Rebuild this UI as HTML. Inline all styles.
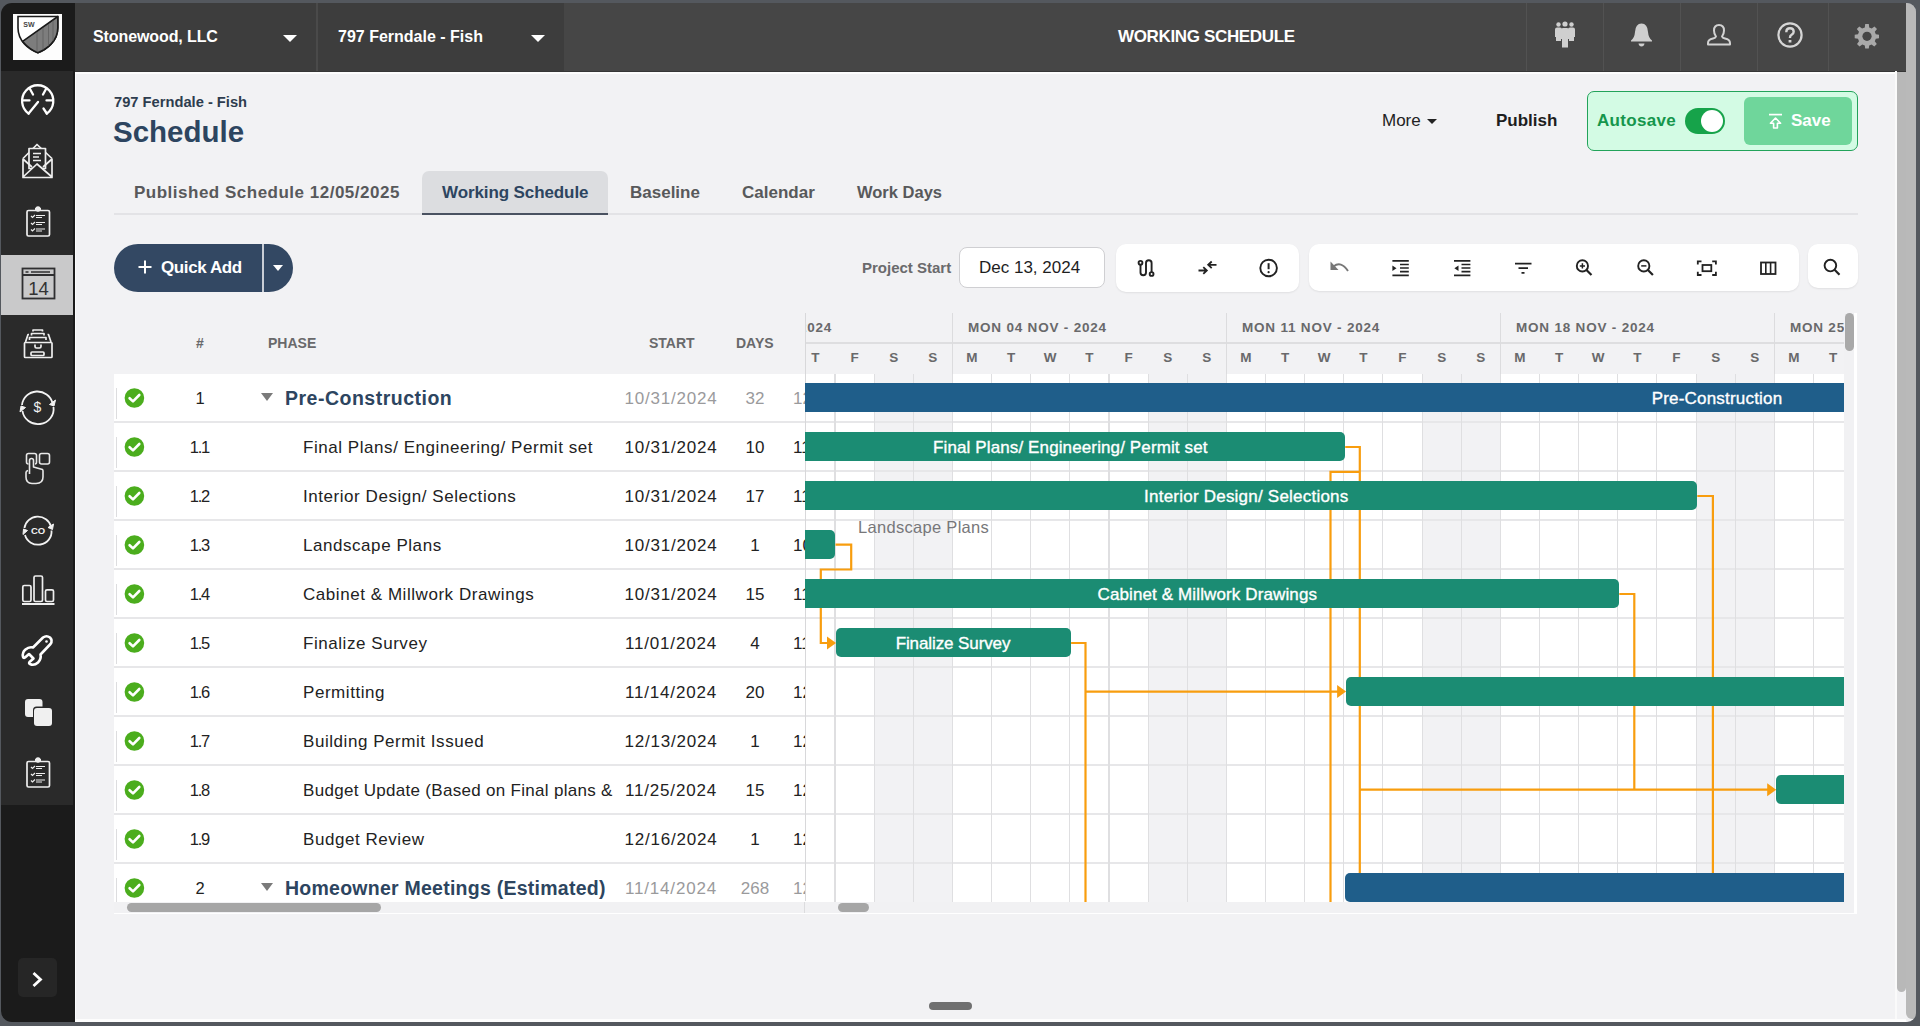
<!DOCTYPE html>
<html><head><meta charset="utf-8">
<style>
*{box-sizing:border-box;margin:0;padding:0}
html,body{width:1920px;height:1026px;overflow:hidden;background:#f2f2f4;font-family:"Liberation Sans",sans-serif;position:relative}
.a{position:absolute}
.t{position:absolute;white-space:nowrap;line-height:1}
svg{position:absolute;overflow:visible}
#frame{position:absolute;left:1px;top:3px;width:1915px;height:1019px;border-radius:11px 9px 9px 11px;box-shadow:0 0 0 40px #54585e;z-index:50;pointer-events:none}
.tri{position:absolute;width:0;height:0;border-left:7px solid transparent;border-right:7px solid transparent;border-top:7px solid #fff}
.tdiv{position:absolute;top:3px;width:1px;height:68px;background:#525252}
</style></head><body>
<!-- sidebar -->
<div class="a" style="left:0;top:0;width:75px;height:1026px;background:#2a2a2a"></div>
<div class="a" style="left:0;top:0;width:75px;height:71px;background:#1b1b1b"></div>
<div class="a" style="left:0;top:805px;width:75px;height:221px;background:#1b1b1b"></div>
<div class="a" style="left:0;top:255px;width:75px;height:60px;background:#c9c9ca"></div>
<div class="a" style="left:73px;top:71px;width:2px;height:955px;background:#1a1a1a"></div><div class="a" style="left:75px;top:71px;width:1.3px;height:955px;background:#fcfcfd"></div>
<!-- top bar -->
<div class="a" style="left:75px;top:72px;width:1822px;height:2px;background:#fdfdfd"></div>
<div class="a" style="left:75px;top:0;width:1831px;height:72px;background:#464646;border-bottom:1px solid #363636"></div>
<div class="a" style="left:75px;top:0;width:241px;height:71px;background:#3d3d3d"></div>
<div class="a" style="left:316px;top:0;width:2px;height:71px;background:#4a4a4a"></div>
<div class="a" style="left:318px;top:0;width:246px;height:71px;background:#3d3d3d"></div>
<div class="t" style="left:93px;top:29px;font-size:16px;font-weight:bold;color:#fff;letter-spacing:-0.1px">Stonewood, LLC</div>
<div class="tri" style="left:283px;top:35px"></div>
<div class="t" style="left:338px;top:29px;font-size:16px;font-weight:bold;color:#fff">797 Ferndale - Fish</div>
<div class="tri" style="left:531px;top:35px"></div>
<div class="t" style="left:1118px;top:28px;font-size:17px;font-weight:bold;color:#fff;letter-spacing:-0.35px">WORKING SCHEDULE</div>
<div class="tdiv" style="left:1526px"></div>
<div class="tdiv" style="left:1603px"></div>
<div class="tdiv" style="left:1680px"></div>
<div class="tdiv" style="left:1757px"></div>
<div class="tdiv" style="left:1828px"></div>
<!--TISTART--><svg style="left:1553px;top:20px" width="24" height="29" viewBox="0 0 24 29" fill="#cfcfcf">
  <circle cx="5.5" cy="4.5" r="2.2"/><circle cx="12" cy="4" r="2.6"/><circle cx="18.5" cy="4.5" r="2.2"/>
  <path d="M2 9.5Q2 7.5 4 7.5H7Q9 7.5 9 9.5V17H8V21H3V17H2Z"/>
  <path d="M15 9.5Q15 7.5 17 7.5H20Q22 7.5 22 9.5V17H21V21H16V17H15Z"/>
  <path d="M8 10Q8 8 10 8H14Q16 8 16 10V19H15V27.5H9V19H8Z"/>
</svg>
<svg style="left:1630px;top:22px" width="23" height="26" viewBox="0 0 23 26" fill="#cfcfcf">
  <path d="M11.5 1.5Q17.5 1.5 18 10Q18.5 16 22 18.5V19.5H1V18.5Q4.5 16 5 10Q5.5 1.5 11.5 1.5Z"/>
  <path d="M8.5 21.5H14.5Q14 24.5 11.5 24.5Q9 24.5 8.5 21.5Z"/>
</svg>
<svg style="left:1706px;top:23px" width="26" height="24" viewBox="0 0 26 24" fill="none" stroke="#d2d2d2" stroke-width="2" stroke-linejoin="round">
  <path d="M13 2Q18 2 18 7.5Q18 11 16 13.5Q16.5 15 19 15.5Q24 16.5 24 20V21.5H2V20Q2 16.5 7 15.5Q9.5 15 10 13.5Q8 11 8 7.5Q8 2 13 2Z"/>
</svg>
<svg style="left:1776px;top:21px" width="28" height="28" viewBox="0 0 28 28">
  <circle cx="14" cy="14" r="11.6" fill="none" stroke="#d6d6d6" stroke-width="2.2"/>
  <path d="M10.3 11.2Q10.3 7.3 14 7.3Q17.7 7.3 17.7 10.8Q17.7 12.8 15.5 13.8Q14 14.5 14 16.5V17" fill="none" stroke="#d6d6d6" stroke-width="2.4"/>
  <rect x="12.6" y="19" width="2.8" height="2.5" fill="#d6d6d6"/>
</svg>
<svg style="left:1854px;top:23px" width="26" height="26" viewBox="0 0 26 26">
  <g fill="#a9a9a9" transform="translate(13 13)">
    <path d="M-1.8 -12H1.8L2.2 -8.5L4.7 -7.4L7.5 -9.6L10 -7.1L7.8 -4.3L8.8 -1.8L12 -1.3V2.3L8.8 2.7L7.8 5.2L9.8 8L7.3 10.5L4.5 8.4L2.2 9.4L1.8 12.5H-1.8L-2.2 9.4L-4.7 8.4L-7.5 10.5L-10 8L-8 5.2L-9 2.7L-12.3 2.3V-1.3L-9 -1.8L-8 -4.3L-10.2 -7.1L-7.7 -9.6L-4.9 -7.4L-2.2 -8.5Z"/>
  </g>
  <circle cx="13" cy="13.3" r="4.6" fill="#464646"/>
</svg>
<!--TIEND-->
<!-- right scrollbars -->
<div class="a" style="left:1906px;top:3px;width:9.5px;height:1016px;background:#b9b9b9;border-radius:0 9px 0 6px"></div>
<div class="a" style="left:1897px;top:72px;width:9px;height:920px;background:#b8b8b8;border-radius:0 0 5px 5px"></div>
<div class="a" style="left:1895px;top:71px;width:2px;height:950px;background:#fafafa"></div>

<!-- page header -->
<div class="t" style="left:114px;top:95px;font-size:14.7px;font-weight:bold;color:#2e3d4f">797 Ferndale - Fish</div>
<div class="t" style="left:113px;top:117px;font-size:29.5px;font-weight:bold;color:#2d4560">Schedule</div>
<div class="t" style="left:1382px;top:112px;font-size:17px;color:#222">More</div>
<div class="a" style="left:1427px;top:119px;width:0;height:0;border-left:5px solid transparent;border-right:5px solid transparent;border-top:5px solid #222"></div>
<div class="t" style="left:1496px;top:112px;font-size:17px;font-weight:bold;color:#1e1e1e">Publish</div>
<div class="a" style="left:1587px;top:91px;width:271px;height:60px;background:#d3fbe4;border:1.5px solid #22a35a;border-radius:7px"></div>
<div class="t" style="left:1597px;top:112px;font-size:17px;font-weight:bold;color:#15964c;letter-spacing:0.3px">Autosave</div>
<div class="a" style="left:1685px;top:108px;width:40px;height:26px;background:#16a34a;border-radius:13px"></div>
<div class="a" style="left:1701px;top:110px;width:22px;height:22px;background:#fff;border-radius:11px"></div>
<div class="a" style="left:1744px;top:97px;width:108px;height:48px;background:#6fd69b;border-radius:6px"></div>
<svg style="left:1768px;top:112px" width="16" height="18" viewBox="0 0 16 18"><path d="M1 2.6H14" stroke="#fff" stroke-width="1.7"/><path d="M7.5 6L12.6 11.2H9.4V16H5.6V11.2H2.4Z" stroke="#fff" stroke-width="1.6" fill="none" stroke-linejoin="round"/></svg>
<div class="t" style="left:1791px;top:112px;font-size:17px;font-weight:bold;color:#fff">Save</div>
<!-- tabs -->
<div class="a" style="left:114px;top:213px;width:1744px;height:2px;background:#e3e3e6"></div>
<div class="a" style="left:422px;top:171px;width:186px;height:44px;background:#dcdde0;border-radius:7px 7px 0 0;border-bottom:2px solid #4a5261"></div>
<div class="t" style="left:134px;top:184px;font-size:17px;font-weight:bold;color:#58595b;letter-spacing:0.5px">Published Schedule 12/05/2025</div>
<div class="t" style="left:442px;top:184px;font-size:17px;font-weight:bold;color:#2d4560;letter-spacing:-0.1px">Working Schedule</div>
<div class="t" style="left:630px;top:184px;font-size:17px;font-weight:bold;color:#58595b">Baseline</div>
<div class="t" style="left:742px;top:184px;font-size:17px;font-weight:bold;color:#58595b">Calendar</div>
<div class="t" style="left:857px;top:184px;font-size:16.5px;font-weight:bold;color:#58595b">Work Days</div>
<!-- toolbar -->
<div class="a" style="left:114px;top:244px;width:179px;height:48px;background:#334863;border-radius:24px"></div>
<div class="a" style="left:262px;top:244px;width:1.5px;height:48px;background:#c9ced6"></div>
<svg style="left:138px;top:260px" width="14" height="14" viewBox="0 0 14 14"><path d="M7 0.5V13.5M0.5 7H13.5" stroke="#fff" stroke-width="2"/></svg>
<div class="t" style="left:161px;top:259px;font-size:17px;font-weight:bold;color:#fff;letter-spacing:-0.4px">Quick Add</div>
<div class="a" style="left:273px;top:265px;width:0;height:0;border-left:5px solid transparent;border-right:5px solid transparent;border-top:6px solid #fff"></div>
<div class="t" style="left:862px;top:260px;font-size:15px;font-weight:bold;color:#6a6a6c">Project Start</div>
<div class="a" style="left:959px;top:247px;width:146px;height:41px;background:#fff;border:1px solid #cfcfd2;border-radius:8px"></div>
<div class="t" style="left:979px;top:259px;font-size:17px;color:#1e1e1e">Dec 13, 2024</div>
<div class="a" style="left:1116px;top:244px;width:183px;height:48px;background:#fff;border-radius:10px;box-shadow:0 1px 2px rgba(0,0,0,0.08)"></div>
<div class="a" style="left:1309px;top:244px;width:490px;height:47px;background:#fff;border-radius:10px;box-shadow:0 1px 2px rgba(0,0,0,0.08)"></div>
<div class="a" style="left:1808px;top:244px;width:50px;height:44px;background:#fff;border-radius:10px;box-shadow:0 1px 2px rgba(0,0,0,0.08)"></div>
<!--ICSTART--><!-- logo -->
<div class="a" style="left:13px;top:14px;width:49px;height:46px;background:#fdfdfd"></div>
<svg style="left:13px;top:14px" width="49" height="46" viewBox="0 0 49 46">
  <path d="M5 2.5H44.8V14C44.8 27 34 35 24.9 38.7C15.5 35 5 27 5 14Z" fill="#fff" stroke="#1a1a1a" stroke-width="1.6"/>
  <path d="M44.8 2.5L9.6 27.4C14 32.5 19.5 36.5 24.9 38.7C34 35 44.8 27 44.8 14Z" fill="#7d7d7d" stroke="#1a1a1a" stroke-width="1.6" stroke-linejoin="round"/>
  <path d="M24 18V38M30 14V36M35.5 10V32M40 6.5V27" stroke="#5a5a5a" stroke-width="0.7"/>
  <text x="10.3" y="13" font-family="Liberation Sans" font-weight="bold" font-size="7" fill="#444">SW</text>
</svg>
<!-- sidebar icons -->
<svg style="left:12px;top:75px" width="50" height="50" viewBox="0 0 50 50" fill="none" stroke="#fff" stroke-width="2.3" stroke-linecap="round">
  <path d="M16.6 38.5A15.6 15.6 0 1 1 34.8 38.5"/><path d="M16.6 38.5L26 27M34.8 38.5L31.5 33.5M11.5 25.4H17.5M34.5 25.4H40.3M18 14L21 19.5M34 14L31 19.5"/>
</svg>
<svg style="left:12px;top:136px" width="50" height="50" viewBox="0 0 50 50" fill="none" stroke="#eee" stroke-width="1.7" stroke-linejoin="round">
  <path d="M11 22.5L25 8.5L40 22.5"/><rect x="17" y="12.5" width="16.5" height="20" fill="#2a2a2a"/>
  <path d="M21 17.5H29M21 21H27M21 24.5H29"/>
  <path d="M11 41L25 28L40 41Z" fill="#2a2a2a" stroke="none"/><path d="M11 22.5V41.5H40V22.5M11 41L25 28L40 41M11 23L20 31M40 23L31 31"/>
</svg>
<g id="clip1"></g>
<svg style="left:12px;top:197px" width="50" height="50" viewBox="0 0 50 50" fill="none" stroke="#eee" stroke-width="1.7">
  <rect x="15" y="13.5" width="22.5" height="25.5" rx="1.5"/><path d="M23 12.5H29" stroke-width="3"/><circle cx="26" cy="12" r="1.8" fill="#eee"/>
  <path d="M19 19L20.5 20.5L23 18M19 26L20.5 27.5L23 25M19 32.5L20.5 34L23 31.5" stroke-width="1.2"/>
  <path d="M24 18.5H33M24 20.5H30M24 25.5H33M24 27.5H30M24 32H33M24 34H30" stroke-width="1.1"/>
</svg>
<svg style="left:12px;top:259px" width="50" height="50" viewBox="0 0 50 50" fill="none" stroke="#2f2f31" stroke-width="1.8">
  <rect x="10.5" y="9.5" width="32" height="30"/><path d="M10.5 16H42.5" stroke-width="2"/><path d="M13.5 13H16.5M19 13H38" stroke-width="1.3"/>
  <text x="26.5" y="35.5" text-anchor="middle" font-family="Liberation Sans" font-size="18.5" fill="#333" stroke="none">14</text>
</svg>
<svg style="left:12px;top:319px" width="50" height="50" viewBox="0 0 50 50" fill="none" stroke="#eee" stroke-width="1.7" stroke-linejoin="round">
  <rect x="12.5" y="23.5" width="27.5" height="15" rx="0.8"/><path d="M23 25.5V27.5Q23 29 24.5 29H27.5Q29 29 29 27.5V25.5"/><rect x="19" y="33" width="13" height="3.5" rx="1"/>
  <path d="M13.5 23L16 15.5H17M39 23L36.5 15.5H35.5M17.5 21V18.5H34V21M19.5 16.5V14.5H32V16.5M21 12.5V11H30.5V12.5"/>
</svg>
<svg style="left:12px;top:381px" width="50" height="50" viewBox="0 0 50 50" fill="none" stroke="#f2f2f2" stroke-width="1.8">
  <path d="M10 24A15.5 15 0 0 1 40.5 22"/><path d="M41.5 26A15.5 15 0 0 1 10.5 30"/>
  <path d="M37.5 23.5L43.5 19L42 25Z" fill="#f2f2f2" stroke-width="1"/><path d="M13.5 26.5L8 31L9 25Z" fill="#f2f2f2" stroke-width="1"/>
  <text x="25.5" y="31" text-anchor="middle" font-family="Liberation Sans" font-size="14" fill="#f2f2f2" stroke="none">$</text>
</svg>
<svg style="left:12px;top:442px" width="50" height="50" viewBox="0 0 50 50" fill="none" stroke="#e8e8e8" stroke-width="1.6" stroke-linejoin="round">
  <path d="M16.5 22Q14.5 22 14.5 20V13.5Q14.5 11.5 16.5 11.5H22.5Q24.5 11.5 24.5 13.5V20Q24.5 22 23 22"/>
  <rect x="27.5" y="11.5" width="10" height="10.5" rx="2"/>
  <path d="M17.5 32V18.5Q17.5 16.5 19.5 16.5Q21.5 16.5 21.5 18.5V25L30.5 27.5Q31 28 31 29V35Q31 41.5 24 41.5H20Q14 41.5 14 35V30.5Q14 29 16 28.5"/>
</svg>
<svg style="left:12px;top:504px" width="50" height="50" viewBox="0 0 50 50" fill="none" stroke="#f2f2f2" stroke-width="1.8">
  <path d="M12.5 24A13.5 13 0 0 1 39 22.5"/><path d="M39.5 26.5A13.5 13 0 0 1 13 31"/>
  <path d="M36 23.5L41.5 20L40.5 25.5Z" fill="#f2f2f2" stroke-width="1"/><path d="M15.5 26.5L11 30.5L11.5 25Z" fill="#f2f2f2" stroke-width="1"/>
  <text x="26" y="29.5" text-anchor="middle" font-family="Liberation Sans" font-weight="bold" font-size="9.5" fill="#f2f2f2" stroke="none">CO</text>
</svg>
<svg style="left:12px;top:564px" width="50" height="50" viewBox="0 0 50 50" fill="none" stroke="#eee" stroke-width="1.7">
  <rect x="10.8" y="21.5" width="8.2" height="16" rx="1.5"/><rect x="22" y="12" width="8.5" height="25.5" rx="1.5"/><rect x="33.5" y="25.8" width="8" height="11.7" rx="1.5"/><path d="M10 40H42.5" stroke-width="1.8"/>
</svg>
<svg style="left:12px;top:625px" width="50" height="50" viewBox="0 0 50 50" fill="none" stroke="#fff" stroke-width="2.6" stroke-linejoin="round">
  <path d="M31 12.5Q34.5 10 38 12.5Q41 15.5 38.5 19L28.5 29.5Q29.5 34 26 37.5Q22 41 18 39Q16.5 38.3 17.5 37L21.5 33.5L17 29L13 32.5Q11.5 33.5 11 31.8Q10 27.5 13.5 24.5Q17 21.5 21 22.5Z"/><circle cx="34.5" cy="16.5" r="1.3" fill="#fff" stroke="none"/>
</svg>
<svg style="left:12px;top:687px" width="50" height="50" viewBox="0 0 50 50">
  <path d="M16 12H27.5Q30.5 12 30.5 15V19.5H24.5Q21 19.5 21 23V30H16Q13 30 13 27V15Q13 12 16 12Z" fill="#f0f0f0"/>
  <rect x="22" y="21" width="18" height="18" rx="3" fill="#f0f0f0"/>
</svg>
<svg style="left:12px;top:748px" width="50" height="50" viewBox="0 0 50 50" fill="none" stroke="#eee" stroke-width="1.7">
  <rect x="15" y="13.5" width="22.5" height="25.5" rx="1.5"/><path d="M23 12.5H29" stroke-width="3"/><circle cx="26" cy="12" r="1.8" fill="#eee"/>
  <path d="M19 19L20.5 20.5L23 18M19 26L20.5 27.5L23 25M19 32.5L20.5 34L23 31.5" stroke-width="1.2"/>
  <path d="M24 18.5H33M24 20.5H30M24 25.5H33M24 27.5H30M24 32H33M24 34H30" stroke-width="1.1"/>
</svg>
<!-- expand button -->
<div class="a" style="left:18px;top:958px;width:39px;height:39px;background:#262626;border-radius:5px"></div>
<svg style="left:18px;top:958px" width="39" height="39" viewBox="0 0 39 39"><path d="M15.5 15L22.5 21.5L15.5 28" stroke="#fff" stroke-width="2.8" fill="none"/></svg>
<!--ICEND-->
<!--TOSTART--><svg style="left:0;top:0" width="1920" height="1026" viewBox="0 0 1920 1026" fill="none" stroke="#222" stroke-width="1.9">
  <circle cx="1140.5" cy="262.8" r="1.9"/><circle cx="1151.6" cy="274" r="1.9"/>
  <path d="M1140.5 264.7V272.5A2.75 2.75 0 0 0 1146 272.5V263A2.8 2.8 0 0 1 1151.6 263V272.1"/>
  <path d="M1198.5 270.5H1206.5M1203.3 267.2L1206.8 270.5L1203.3 273.8M1216.5 264.8H1208.5M1211.7 261.5L1208.2 264.8L1211.7 268.1" stroke-width="1.8"/>
  <circle cx="1268.6" cy="268" r="8.3" stroke-width="1.9"/><path d="M1268.6 263.2V269.2" stroke-width="2"/><circle cx="1268.6" cy="272.2" r="1.1" fill="#222" stroke="none"/>
  <path d="M1333.5 266.5Q1341 260.5 1348 271" stroke="#777" stroke-width="1.9"/><path d="M1330.5 261.5V270H1338.5Z" fill="#777" stroke="none"/>
  <path d="M1392.4 260.9H1408.8M1400 264.5H1408.8M1400 268H1408.8M1400 271.7H1408.8M1392.4 275.4H1408.8" stroke-width="1.7"/><path d="M1392.4 265.5L1396.5 268.3L1392.4 271Z" fill="#222" stroke="none"/>
  <path d="M1454 260.9H1470.4M1461.5 264.5H1470.4M1461.5 268H1470.4M1461.5 271.7H1470.4M1454 275.4H1470.4" stroke-width="1.7"/><path d="M1458.5 265.5L1454.4 268.3L1458.5 271Z" fill="#222" stroke="none"/>
  <path d="M1515 263.7H1531.5M1518.5 268.2H1528M1521.5 272.8H1524.5" stroke-width="1.8"/>
  <circle cx="1582.4" cy="265.9" r="5.6"/><path d="M1586.5 270L1591.5 275" stroke-width="2.2"/><path d="M1582.4 263.3V268.5M1579.8 265.9H1585" stroke-width="1.5"/>
  <circle cx="1643.8" cy="265.9" r="5.6"/><path d="M1647.9 270L1652.9 275" stroke-width="2.2"/><path d="M1641.2 265.9H1646.4" stroke-width="1.5"/>
  <path d="M1697.8 264.5V261.3H1701.5M1712.2 261.3H1715.9V264.5M1715.9 271.8V275H1712.2M1701.5 275H1697.8V271.8" stroke-width="1.8"/><rect x="1702.5" y="265" width="8.8" height="6.2" stroke-width="1.8"/>
  <rect x="1761" y="262.5" width="14.5" height="11.5" stroke-width="1.8"/><path d="M1765.8 262.5V274M1770.6 262.5V274" stroke-width="1.6"/>
  <circle cx="1830.4" cy="265.6" r="5.8" stroke-width="1.9"/><path d="M1834.6 269.8L1839.5 274.7" stroke-width="2.2"/>
</svg>
<!--TOEND-->
<!--GRIDSTART--><div class="a" style="left:114px;top:313px;width:1743px;height:601px;background:#fff"></div>
<div class="a" style="left:114px;top:313px;width:1730px;height:61px;background:#f2f2f4"></div>
<div class="a" style="left:1844px;top:313px;width:10px;height:600px;background:#f1f1f3"></div>
<div class="a" style="left:1845px;top:313px;width:9px;height:38px;background:#a9a9a9;border-radius:5px"></div>
<div class="t" style="left:196px;top:335.5px;font-size:14px;font-weight:bold;color:#69696b">#</div>
<div class="t" style="left:268px;top:335.5px;font-size:14px;font-weight:bold;color:#69696b">PHASE</div>
<div class="t" style="left:649px;top:335.5px;font-size:14px;font-weight:bold;color:#69696b">START</div>
<div class="t" style="left:736px;top:335.5px;font-size:14px;font-weight:bold;color:#69696b">DAYS</div>
<div class="a" style="left:114px;top:374px;width:691px;height:528px;overflow:hidden">
<div class="a" style="left:0;top:47px;width:691px;height:2px;background:#e7e7e9"></div>
<div class="a" style="left:2px;top:14px;width:1px;height:31px;background:#dddddf"></div>
<svg style="left:10px;top:14px" width="21" height="21" viewBox="0 0 21 21"><circle cx="10.4" cy="10" r="9.8" fill="#4bad1d"/><path d="M5.6 10.2L9 13.4L15.3 7" stroke="#fff" stroke-width="2.6" fill="none" stroke-linecap="round" stroke-linejoin="round"/></svg>
<div class="t" style="left:36px;top:16px;width:100px;text-align:center;font-size:16.5px;color:#222;letter-spacing:-1.2px;text-indent:-1.2px">1</div>
<div class="a" style="left:147px;top:19px;width:0;height:0;border-left:6.5px solid transparent;border-right:6.5px solid transparent;border-top:8px solid #7a7a7a"></div>
<div class="t" style="left:171px;top:15px;font-size:19.5px;font-weight:bold;color:#2d4560;letter-spacing:0.5px">Pre-Construction</div>
<div class="t" style="left:507px;top:16px;width:100px;text-align:center;font-size:17px;color:#9a9a9c;letter-spacing:0.8px;background:#fff">10/31/2024</div>
<div class="t" style="left:611px;top:16px;width:60px;text-align:center;font-size:17px;color:#9a9a9c">32</div>
<div class="t" style="left:679px;top:16px;font-size:17px;color:#9a9a9c">12</div>
<div class="a" style="left:0;top:96px;width:691px;height:2px;background:#e7e7e9"></div>
<div class="a" style="left:2px;top:63px;width:1px;height:31px;background:#dddddf"></div>
<svg style="left:10px;top:63px" width="21" height="21" viewBox="0 0 21 21"><circle cx="10.4" cy="10" r="9.8" fill="#4bad1d"/><path d="M5.6 10.2L9 13.4L15.3 7" stroke="#fff" stroke-width="2.6" fill="none" stroke-linecap="round" stroke-linejoin="round"/></svg>
<div class="t" style="left:36px;top:65px;width:100px;text-align:center;font-size:16.5px;color:#222;letter-spacing:-1.2px;text-indent:-1.2px">1.1</div>
<div class="t" style="left:189px;top:65px;width:318px;overflow:hidden;font-size:17px;color:#222;letter-spacing:0.55px">Final Plans/ Engineering/ Permit set</div>
<div class="t" style="left:507px;top:65px;width:100px;text-align:center;font-size:17px;color:#222;letter-spacing:0.8px;background:#fff">10/31/2024</div>
<div class="t" style="left:611px;top:65px;width:60px;text-align:center;font-size:17px;color:#222">10</div>
<div class="t" style="left:679px;top:65px;font-size:17px;color:#222">11</div>
<div class="a" style="left:0;top:145px;width:691px;height:2px;background:#e7e7e9"></div>
<div class="a" style="left:2px;top:112px;width:1px;height:31px;background:#dddddf"></div>
<svg style="left:10px;top:112px" width="21" height="21" viewBox="0 0 21 21"><circle cx="10.4" cy="10" r="9.8" fill="#4bad1d"/><path d="M5.6 10.2L9 13.4L15.3 7" stroke="#fff" stroke-width="2.6" fill="none" stroke-linecap="round" stroke-linejoin="round"/></svg>
<div class="t" style="left:36px;top:114px;width:100px;text-align:center;font-size:16.5px;color:#222;letter-spacing:-1.2px;text-indent:-1.2px">1.2</div>
<div class="t" style="left:189px;top:114px;width:318px;overflow:hidden;font-size:17px;color:#222;letter-spacing:0.55px">Interior Design/ Selections</div>
<div class="t" style="left:507px;top:114px;width:100px;text-align:center;font-size:17px;color:#222;letter-spacing:0.8px;background:#fff">10/31/2024</div>
<div class="t" style="left:611px;top:114px;width:60px;text-align:center;font-size:17px;color:#222">17</div>
<div class="t" style="left:679px;top:114px;font-size:17px;color:#222">11</div>
<div class="a" style="left:0;top:194px;width:691px;height:2px;background:#e7e7e9"></div>
<div class="a" style="left:2px;top:161px;width:1px;height:31px;background:#dddddf"></div>
<svg style="left:10px;top:161px" width="21" height="21" viewBox="0 0 21 21"><circle cx="10.4" cy="10" r="9.8" fill="#4bad1d"/><path d="M5.6 10.2L9 13.4L15.3 7" stroke="#fff" stroke-width="2.6" fill="none" stroke-linecap="round" stroke-linejoin="round"/></svg>
<div class="t" style="left:36px;top:163px;width:100px;text-align:center;font-size:16.5px;color:#222;letter-spacing:-1.2px;text-indent:-1.2px">1.3</div>
<div class="t" style="left:189px;top:163px;width:318px;overflow:hidden;font-size:17px;color:#222;letter-spacing:0.55px">Landscape Plans</div>
<div class="t" style="left:507px;top:163px;width:100px;text-align:center;font-size:17px;color:#222;letter-spacing:0.8px;background:#fff">10/31/2024</div>
<div class="t" style="left:611px;top:163px;width:60px;text-align:center;font-size:17px;color:#222">1</div>
<div class="t" style="left:679px;top:163px;font-size:17px;color:#222">10</div>
<div class="a" style="left:0;top:243px;width:691px;height:2px;background:#e7e7e9"></div>
<div class="a" style="left:2px;top:210px;width:1px;height:31px;background:#dddddf"></div>
<svg style="left:10px;top:210px" width="21" height="21" viewBox="0 0 21 21"><circle cx="10.4" cy="10" r="9.8" fill="#4bad1d"/><path d="M5.6 10.2L9 13.4L15.3 7" stroke="#fff" stroke-width="2.6" fill="none" stroke-linecap="round" stroke-linejoin="round"/></svg>
<div class="t" style="left:36px;top:212px;width:100px;text-align:center;font-size:16.5px;color:#222;letter-spacing:-1.2px;text-indent:-1.2px">1.4</div>
<div class="t" style="left:189px;top:212px;width:318px;overflow:hidden;font-size:17px;color:#222;letter-spacing:0.55px">Cabinet &amp; Millwork Drawings</div>
<div class="t" style="left:507px;top:212px;width:100px;text-align:center;font-size:17px;color:#222;letter-spacing:0.8px;background:#fff">10/31/2024</div>
<div class="t" style="left:611px;top:212px;width:60px;text-align:center;font-size:17px;color:#222">15</div>
<div class="t" style="left:679px;top:212px;font-size:17px;color:#222">11</div>
<div class="a" style="left:0;top:292px;width:691px;height:2px;background:#e7e7e9"></div>
<div class="a" style="left:2px;top:259px;width:1px;height:31px;background:#dddddf"></div>
<svg style="left:10px;top:259px" width="21" height="21" viewBox="0 0 21 21"><circle cx="10.4" cy="10" r="9.8" fill="#4bad1d"/><path d="M5.6 10.2L9 13.4L15.3 7" stroke="#fff" stroke-width="2.6" fill="none" stroke-linecap="round" stroke-linejoin="round"/></svg>
<div class="t" style="left:36px;top:261px;width:100px;text-align:center;font-size:16.5px;color:#222;letter-spacing:-1.2px;text-indent:-1.2px">1.5</div>
<div class="t" style="left:189px;top:261px;width:318px;overflow:hidden;font-size:17px;color:#222;letter-spacing:0.55px">Finalize Survey</div>
<div class="t" style="left:507px;top:261px;width:100px;text-align:center;font-size:17px;color:#222;letter-spacing:0.8px;background:#fff">11/01/2024</div>
<div class="t" style="left:611px;top:261px;width:60px;text-align:center;font-size:17px;color:#222">4</div>
<div class="t" style="left:679px;top:261px;font-size:17px;color:#222">11</div>
<div class="a" style="left:0;top:341px;width:691px;height:2px;background:#e7e7e9"></div>
<div class="a" style="left:2px;top:308px;width:1px;height:31px;background:#dddddf"></div>
<svg style="left:10px;top:308px" width="21" height="21" viewBox="0 0 21 21"><circle cx="10.4" cy="10" r="9.8" fill="#4bad1d"/><path d="M5.6 10.2L9 13.4L15.3 7" stroke="#fff" stroke-width="2.6" fill="none" stroke-linecap="round" stroke-linejoin="round"/></svg>
<div class="t" style="left:36px;top:310px;width:100px;text-align:center;font-size:16.5px;color:#222;letter-spacing:-1.2px;text-indent:-1.2px">1.6</div>
<div class="t" style="left:189px;top:310px;width:318px;overflow:hidden;font-size:17px;color:#222;letter-spacing:0.55px">Permitting</div>
<div class="t" style="left:507px;top:310px;width:100px;text-align:center;font-size:17px;color:#222;letter-spacing:0.8px;background:#fff">11/14/2024</div>
<div class="t" style="left:611px;top:310px;width:60px;text-align:center;font-size:17px;color:#222">20</div>
<div class="t" style="left:679px;top:310px;font-size:17px;color:#222">12</div>
<div class="a" style="left:0;top:390px;width:691px;height:2px;background:#e7e7e9"></div>
<div class="a" style="left:2px;top:357px;width:1px;height:31px;background:#dddddf"></div>
<svg style="left:10px;top:357px" width="21" height="21" viewBox="0 0 21 21"><circle cx="10.4" cy="10" r="9.8" fill="#4bad1d"/><path d="M5.6 10.2L9 13.4L15.3 7" stroke="#fff" stroke-width="2.6" fill="none" stroke-linecap="round" stroke-linejoin="round"/></svg>
<div class="t" style="left:36px;top:359px;width:100px;text-align:center;font-size:16.5px;color:#222;letter-spacing:-1.2px;text-indent:-1.2px">1.7</div>
<div class="t" style="left:189px;top:359px;width:318px;overflow:hidden;font-size:17px;color:#222;letter-spacing:0.55px">Building Permit Issued</div>
<div class="t" style="left:507px;top:359px;width:100px;text-align:center;font-size:17px;color:#222;letter-spacing:0.8px;background:#fff">12/13/2024</div>
<div class="t" style="left:611px;top:359px;width:60px;text-align:center;font-size:17px;color:#222">1</div>
<div class="t" style="left:679px;top:359px;font-size:17px;color:#222">12</div>
<div class="a" style="left:0;top:439px;width:691px;height:2px;background:#e7e7e9"></div>
<div class="a" style="left:2px;top:406px;width:1px;height:31px;background:#dddddf"></div>
<svg style="left:10px;top:406px" width="21" height="21" viewBox="0 0 21 21"><circle cx="10.4" cy="10" r="9.8" fill="#4bad1d"/><path d="M5.6 10.2L9 13.4L15.3 7" stroke="#fff" stroke-width="2.6" fill="none" stroke-linecap="round" stroke-linejoin="round"/></svg>
<div class="t" style="left:36px;top:408px;width:100px;text-align:center;font-size:16.5px;color:#222;letter-spacing:-1.2px;text-indent:-1.2px">1.8</div>
<div class="t" style="left:189px;top:408px;width:318px;overflow:hidden;font-size:17px;color:#222;letter-spacing:0.3px">Budget Update (Based on Final plans &amp;</div>
<div class="t" style="left:507px;top:408px;width:100px;text-align:center;font-size:17px;color:#222;letter-spacing:0.8px;background:#fff">11/25/2024</div>
<div class="t" style="left:611px;top:408px;width:60px;text-align:center;font-size:17px;color:#222">15</div>
<div class="t" style="left:679px;top:408px;font-size:17px;color:#222">12</div>
<div class="a" style="left:0;top:488px;width:691px;height:2px;background:#e7e7e9"></div>
<div class="a" style="left:2px;top:455px;width:1px;height:31px;background:#dddddf"></div>
<svg style="left:10px;top:455px" width="21" height="21" viewBox="0 0 21 21"><circle cx="10.4" cy="10" r="9.8" fill="#4bad1d"/><path d="M5.6 10.2L9 13.4L15.3 7" stroke="#fff" stroke-width="2.6" fill="none" stroke-linecap="round" stroke-linejoin="round"/></svg>
<div class="t" style="left:36px;top:457px;width:100px;text-align:center;font-size:16.5px;color:#222;letter-spacing:-1.2px;text-indent:-1.2px">1.9</div>
<div class="t" style="left:189px;top:457px;width:318px;overflow:hidden;font-size:17px;color:#222;letter-spacing:0.55px">Budget Review</div>
<div class="t" style="left:507px;top:457px;width:100px;text-align:center;font-size:17px;color:#222;letter-spacing:0.8px;background:#fff">12/16/2024</div>
<div class="t" style="left:611px;top:457px;width:60px;text-align:center;font-size:17px;color:#222">1</div>
<div class="t" style="left:679px;top:457px;font-size:17px;color:#222">12</div>
<div class="a" style="left:0;top:537px;width:691px;height:2px;background:#e7e7e9"></div>
<div class="a" style="left:2px;top:504px;width:1px;height:31px;background:#dddddf"></div>
<svg style="left:10px;top:504px" width="21" height="21" viewBox="0 0 21 21"><circle cx="10.4" cy="10" r="9.8" fill="#4bad1d"/><path d="M5.6 10.2L9 13.4L15.3 7" stroke="#fff" stroke-width="2.6" fill="none" stroke-linecap="round" stroke-linejoin="round"/></svg>
<div class="t" style="left:36px;top:506px;width:100px;text-align:center;font-size:16.5px;color:#222;letter-spacing:-1.2px;text-indent:-1.2px">2</div>
<div class="a" style="left:147px;top:509px;width:0;height:0;border-left:6.5px solid transparent;border-right:6.5px solid transparent;border-top:8px solid #7a7a7a"></div>
<div class="t" style="left:171px;top:505px;font-size:19.5px;font-weight:bold;color:#2d4560;letter-spacing:0.25px">Homeowner Meetings (Estimated)</div>
<div class="t" style="left:507px;top:506px;width:100px;text-align:center;font-size:17px;color:#9a9a9c;letter-spacing:0.8px;background:#fff">11/14/2024</div>
<div class="t" style="left:611px;top:506px;width:60px;text-align:center;font-size:17px;color:#9a9a9c">268</div>
<div class="t" style="left:679px;top:506px;font-size:17px;color:#9a9a9c">12</div>
</div>
<div class="a" style="left:114px;top:902px;width:1730px;height:11px;background:#f1f1f3"></div>
<div class="a" style="left:804px;top:902px;width:1px;height:11px;background:#dcdcde"></div>
<div class="a" style="left:127px;top:903px;width:254px;height:9px;background:#a6a6a6;border-radius:4.5px"></div>
<div class="a" style="left:838px;top:903px;width:31px;height:9px;background:#a6a6a6;border-radius:4.5px"></div>
<div class="a" style="left:804.5px;top:313px;width:1039.5px;height:589px;overflow:hidden">
<div class="a" style="left:69.6px;top:61px;width:78.3px;height:528px;background:#f2f2f4"></div>
<div class="a" style="left:343.6px;top:61px;width:78.3px;height:528px;background:#f2f2f4"></div>
<div class="a" style="left:617.6px;top:61px;width:78.3px;height:528px;background:#f2f2f4"></div>
<div class="a" style="left:891.6px;top:61px;width:78.3px;height:528px;background:#f2f2f4"></div>
<div class="a" style="left:0;top:108px;width:1039.5px;height:2px;background:#e7e7e9"></div>
<div class="a" style="left:0;top:157px;width:1039.5px;height:2px;background:#e7e7e9"></div>
<div class="a" style="left:0;top:206px;width:1039.5px;height:2px;background:#e7e7e9"></div>
<div class="a" style="left:0;top:255px;width:1039.5px;height:2px;background:#e7e7e9"></div>
<div class="a" style="left:0;top:304px;width:1039.5px;height:2px;background:#e7e7e9"></div>
<div class="a" style="left:0;top:353px;width:1039.5px;height:2px;background:#e7e7e9"></div>
<div class="a" style="left:0;top:402px;width:1039.5px;height:2px;background:#e7e7e9"></div>
<div class="a" style="left:0;top:451px;width:1039.5px;height:2px;background:#e7e7e9"></div>
<div class="a" style="left:0;top:500px;width:1039.5px;height:2px;background:#e7e7e9"></div>
<div class="a" style="left:0;top:549px;width:1039.5px;height:2px;background:#e7e7e9"></div>
<div class="a" style="left:0;top:598px;width:1039.5px;height:2px;background:#e7e7e9"></div>
<div class="a" style="left:-9.3px;top:61px;width:1.2px;height:528px;background:#dfdfe1"></div>
<div class="a" style="left:29.9px;top:61px;width:1.2px;height:528px;background:#dfdfe1"></div>
<div class="a" style="left:69.0px;top:61px;width:1.2px;height:528px;background:#dfdfe1"></div>
<div class="a" style="left:108.2px;top:61px;width:1.2px;height:528px;background:#dfdfe1"></div>
<div class="a" style="left:147.3px;top:61px;width:1.2px;height:528px;background:#dfdfe1"></div>
<div class="a" style="left:186.4px;top:61px;width:1.2px;height:528px;background:#dfdfe1"></div>
<div class="a" style="left:225.6px;top:61px;width:1.2px;height:528px;background:#dfdfe1"></div>
<div class="a" style="left:264.7px;top:61px;width:1.2px;height:528px;background:#dfdfe1"></div>
<div class="a" style="left:303.9px;top:61px;width:1.2px;height:528px;background:#dfdfe1"></div>
<div class="a" style="left:343.0px;top:61px;width:1.2px;height:528px;background:#dfdfe1"></div>
<div class="a" style="left:382.1px;top:61px;width:1.2px;height:528px;background:#dfdfe1"></div>
<div class="a" style="left:421.3px;top:61px;width:1.2px;height:528px;background:#dfdfe1"></div>
<div class="a" style="left:460.4px;top:61px;width:1.2px;height:528px;background:#dfdfe1"></div>
<div class="a" style="left:499.6px;top:61px;width:1.2px;height:528px;background:#dfdfe1"></div>
<div class="a" style="left:538.7px;top:61px;width:1.2px;height:528px;background:#dfdfe1"></div>
<div class="a" style="left:577.8px;top:61px;width:1.2px;height:528px;background:#dfdfe1"></div>
<div class="a" style="left:617.0px;top:61px;width:1.2px;height:528px;background:#dfdfe1"></div>
<div class="a" style="left:656.1px;top:61px;width:1.2px;height:528px;background:#dfdfe1"></div>
<div class="a" style="left:695.3px;top:61px;width:1.2px;height:528px;background:#dfdfe1"></div>
<div class="a" style="left:734.4px;top:61px;width:1.2px;height:528px;background:#dfdfe1"></div>
<div class="a" style="left:773.5px;top:61px;width:1.2px;height:528px;background:#dfdfe1"></div>
<div class="a" style="left:812.7px;top:61px;width:1.2px;height:528px;background:#dfdfe1"></div>
<div class="a" style="left:851.8px;top:61px;width:1.2px;height:528px;background:#dfdfe1"></div>
<div class="a" style="left:891.0px;top:61px;width:1.2px;height:528px;background:#dfdfe1"></div>
<div class="a" style="left:930.1px;top:61px;width:1.2px;height:528px;background:#dfdfe1"></div>
<div class="a" style="left:969.2px;top:61px;width:1.2px;height:528px;background:#dfdfe1"></div>
<div class="a" style="left:1008.4px;top:61px;width:1.2px;height:528px;background:#dfdfe1"></div>
<div class="a" style="left:1047.5px;top:61px;width:1.2px;height:528px;background:#dfdfe1"></div>
<div class="a" style="left:0;top:29px;width:1039.5px;height:1.5px;background:#dedee0"></div>
<div class="a" style="left:-126.8px;top:0;width:1.5px;height:61px;background:#dcdcde"></div>
<div class="a" style="left:147.1px;top:0;width:1.5px;height:61px;background:#dcdcde"></div>
<div class="a" style="left:421.1px;top:0;width:1.5px;height:61px;background:#dcdcde"></div>
<div class="a" style="left:695.1px;top:0;width:1.5px;height:61px;background:#dcdcde"></div>
<div class="a" style="left:969.1px;top:0;width:1.5px;height:61px;background:#dcdcde"></div>
<div class="t" style="left:-110.5px;top:8px;font-size:13.5px;font-weight:bold;color:#69696b;letter-spacing:0.8px">MON 28 OCT - 2024</div>
<div class="t" style="left:163.5px;top:8px;font-size:13.5px;font-weight:bold;color:#69696b;letter-spacing:0.8px">MON 04 NOV - 2024</div>
<div class="t" style="left:437.5px;top:8px;font-size:13.5px;font-weight:bold;color:#69696b;letter-spacing:0.8px">MON 11 NOV - 2024</div>
<div class="t" style="left:711.5px;top:8px;font-size:13.5px;font-weight:bold;color:#69696b;letter-spacing:0.8px">MON 18 NOV - 2024</div>
<div class="t" style="left:985.4px;top:8px;font-size:13.5px;font-weight:bold;color:#69696b;letter-spacing:0.8px">MON 25 NOV - 2024</div>
<div class="t" style="left:-8.7px;top:38px;width:39.1px;text-align:center;font-size:13.5px;font-weight:bold;color:#69696b">T</div>
<div class="t" style="left:30.5px;top:38px;width:39.1px;text-align:center;font-size:13.5px;font-weight:bold;color:#69696b">F</div>
<div class="t" style="left:69.6px;top:38px;width:39.1px;text-align:center;font-size:13.5px;font-weight:bold;color:#69696b">S</div>
<div class="t" style="left:108.8px;top:38px;width:39.1px;text-align:center;font-size:13.5px;font-weight:bold;color:#69696b">S</div>
<div class="t" style="left:147.9px;top:38px;width:39.1px;text-align:center;font-size:13.5px;font-weight:bold;color:#69696b">M</div>
<div class="t" style="left:187.0px;top:38px;width:39.1px;text-align:center;font-size:13.5px;font-weight:bold;color:#69696b">T</div>
<div class="t" style="left:226.2px;top:38px;width:39.1px;text-align:center;font-size:13.5px;font-weight:bold;color:#69696b">W</div>
<div class="t" style="left:265.3px;top:38px;width:39.1px;text-align:center;font-size:13.5px;font-weight:bold;color:#69696b">T</div>
<div class="t" style="left:304.5px;top:38px;width:39.1px;text-align:center;font-size:13.5px;font-weight:bold;color:#69696b">F</div>
<div class="t" style="left:343.6px;top:38px;width:39.1px;text-align:center;font-size:13.5px;font-weight:bold;color:#69696b">S</div>
<div class="t" style="left:382.7px;top:38px;width:39.1px;text-align:center;font-size:13.5px;font-weight:bold;color:#69696b">S</div>
<div class="t" style="left:421.9px;top:38px;width:39.1px;text-align:center;font-size:13.5px;font-weight:bold;color:#69696b">M</div>
<div class="t" style="left:461.0px;top:38px;width:39.1px;text-align:center;font-size:13.5px;font-weight:bold;color:#69696b">T</div>
<div class="t" style="left:500.2px;top:38px;width:39.1px;text-align:center;font-size:13.5px;font-weight:bold;color:#69696b">W</div>
<div class="t" style="left:539.3px;top:38px;width:39.1px;text-align:center;font-size:13.5px;font-weight:bold;color:#69696b">T</div>
<div class="t" style="left:578.4px;top:38px;width:39.1px;text-align:center;font-size:13.5px;font-weight:bold;color:#69696b">F</div>
<div class="t" style="left:617.6px;top:38px;width:39.1px;text-align:center;font-size:13.5px;font-weight:bold;color:#69696b">S</div>
<div class="t" style="left:656.7px;top:38px;width:39.1px;text-align:center;font-size:13.5px;font-weight:bold;color:#69696b">S</div>
<div class="t" style="left:695.9px;top:38px;width:39.1px;text-align:center;font-size:13.5px;font-weight:bold;color:#69696b">M</div>
<div class="t" style="left:735.0px;top:38px;width:39.1px;text-align:center;font-size:13.5px;font-weight:bold;color:#69696b">T</div>
<div class="t" style="left:774.1px;top:38px;width:39.1px;text-align:center;font-size:13.5px;font-weight:bold;color:#69696b">W</div>
<div class="t" style="left:813.3px;top:38px;width:39.1px;text-align:center;font-size:13.5px;font-weight:bold;color:#69696b">T</div>
<div class="t" style="left:852.4px;top:38px;width:39.1px;text-align:center;font-size:13.5px;font-weight:bold;color:#69696b">F</div>
<div class="t" style="left:891.6px;top:38px;width:39.1px;text-align:center;font-size:13.5px;font-weight:bold;color:#69696b">S</div>
<div class="t" style="left:930.7px;top:38px;width:39.1px;text-align:center;font-size:13.5px;font-weight:bold;color:#69696b">S</div>
<div class="t" style="left:969.8px;top:38px;width:39.1px;text-align:center;font-size:13.5px;font-weight:bold;color:#69696b">M</div>
<div class="t" style="left:1009.0px;top:38px;width:39.1px;text-align:center;font-size:13.5px;font-weight:bold;color:#69696b">T</div>
<div class="t" style="left:1048.1px;top:38px;width:39.1px;text-align:center;font-size:13.5px;font-weight:bold;color:#69696b">W</div>
<div class="a" style="left:0;top:0;width:1px;height:588px;background:#d8d8da"></div>
<svg style="left:0;top:0" width="1039.5" height="588" viewBox="804.5 313 1039.5 588"><path d="M835 544.6 H850.7 V569.5 H820.3 V643 H828 M1070.6 643 H1085 V920 M1085 691.6 H1338 M1344.7 447 H1359.3 V920 M1359.3 471.8 H1330 V920 M1359.3 789.7 H1768 M1696.8 496 H1712.4 V920 M1618.8 594 H1633.8 V789.7" stroke="#f89d0e" stroke-width="2.2" fill="none"/><path d="M835.5 643 L826.5 636.5 L826.5 649.5Z" fill="#f89d0e"/><path d="M1345.6 691.6 L1336.6 685.1 L1336.6 698.1Z" fill="#f89d0e"/><path d="M1775.7 789.7 L1766.7 783.2 L1766.7 796.2Z" fill="#f89d0e"/></svg>
<div class="a" style="left:-8.7px;top:70.3px;width:1084.2px;height:29.2px;background:#1f5e8a;border-radius:5px"></div>
<div class="t" style="left:712.5px;top:77.3px;width:400px;text-align:center;font-size:17px;color:#fff;letter-spacing:0.2px;-webkit-text-stroke:0.35px #fff">Pre-Construction</div>
<div class="a" style="left:-8.7px;top:119.3px;width:548.9px;height:29.2px;background:#1b8c73;border-radius:5px"></div>
<div class="t" style="left:65.8px;top:126.3px;width:400px;text-align:center;font-size:17px;color:#fff;letter-spacing:0.12px;-webkit-text-stroke:0.35px #fff">Final Plans/ Engineering/ Permit set</div>
<div class="a" style="left:-8.7px;top:168.3px;width:901.0px;height:29.2px;background:#1b8c73;border-radius:5px"></div>
<div class="t" style="left:241.8px;top:175.3px;width:400px;text-align:center;font-size:17px;color:#fff;letter-spacing:0.22px;-webkit-text-stroke:0.35px #fff">Interior Design/ Selections</div>
<div class="a" style="left:-8.7px;top:217.3px;width:39.2px;height:29.2px;background:#1b8c73;border-radius:5px"></div>
<div class="t" style="left:53.5px;top:206px;font-size:16.5px;color:#77777a;letter-spacing:0.3px">Landscape Plans</div>
<div class="a" style="left:-8.7px;top:266.3px;width:823.0px;height:29.2px;background:#1b8c73;border-radius:5px"></div>
<div class="t" style="left:202.8px;top:273.3px;width:400px;text-align:center;font-size:17px;color:#fff;letter-spacing:0.12px;-webkit-text-stroke:0.35px #fff">Cabinet &amp; Millwork Drawings</div>
<div class="a" style="left:31.0px;top:315.3px;width:235.1px;height:29.2px;background:#1b8c73;border-radius:5px"></div>
<div class="t" style="left:-51.5px;top:322.3px;width:400px;text-align:center;font-size:17px;color:#fff;letter-spacing:-0.1px;-webkit-text-stroke:0.35px #fff">Finalize Survey</div>
<div class="a" style="left:541.1px;top:364.3px;width:534.4px;height:29.2px;background:#1b8c73;border-radius:5px"></div>
<div class="a" style="left:971.2px;top:462.3px;width:104.3px;height:29.2px;background:#1b8c73;border-radius:5px"></div>
<div class="a" style="left:540.5px;top:560.3px;width:535.0px;height:29.2px;background:#1f5e8a;border-radius:5px"></div>
</div><!--GRIDEND-->
<!-- bottom handle -->
<div class="a" style="left:929px;top:1002px;width:43px;height:8px;background:#707070;border-radius:4px"></div>
<div class="a" style="left:75px;top:1019px;width:1831px;height:3px;background:#fdfdfd"></div>

<div id="frame"></div>
</body></html>
